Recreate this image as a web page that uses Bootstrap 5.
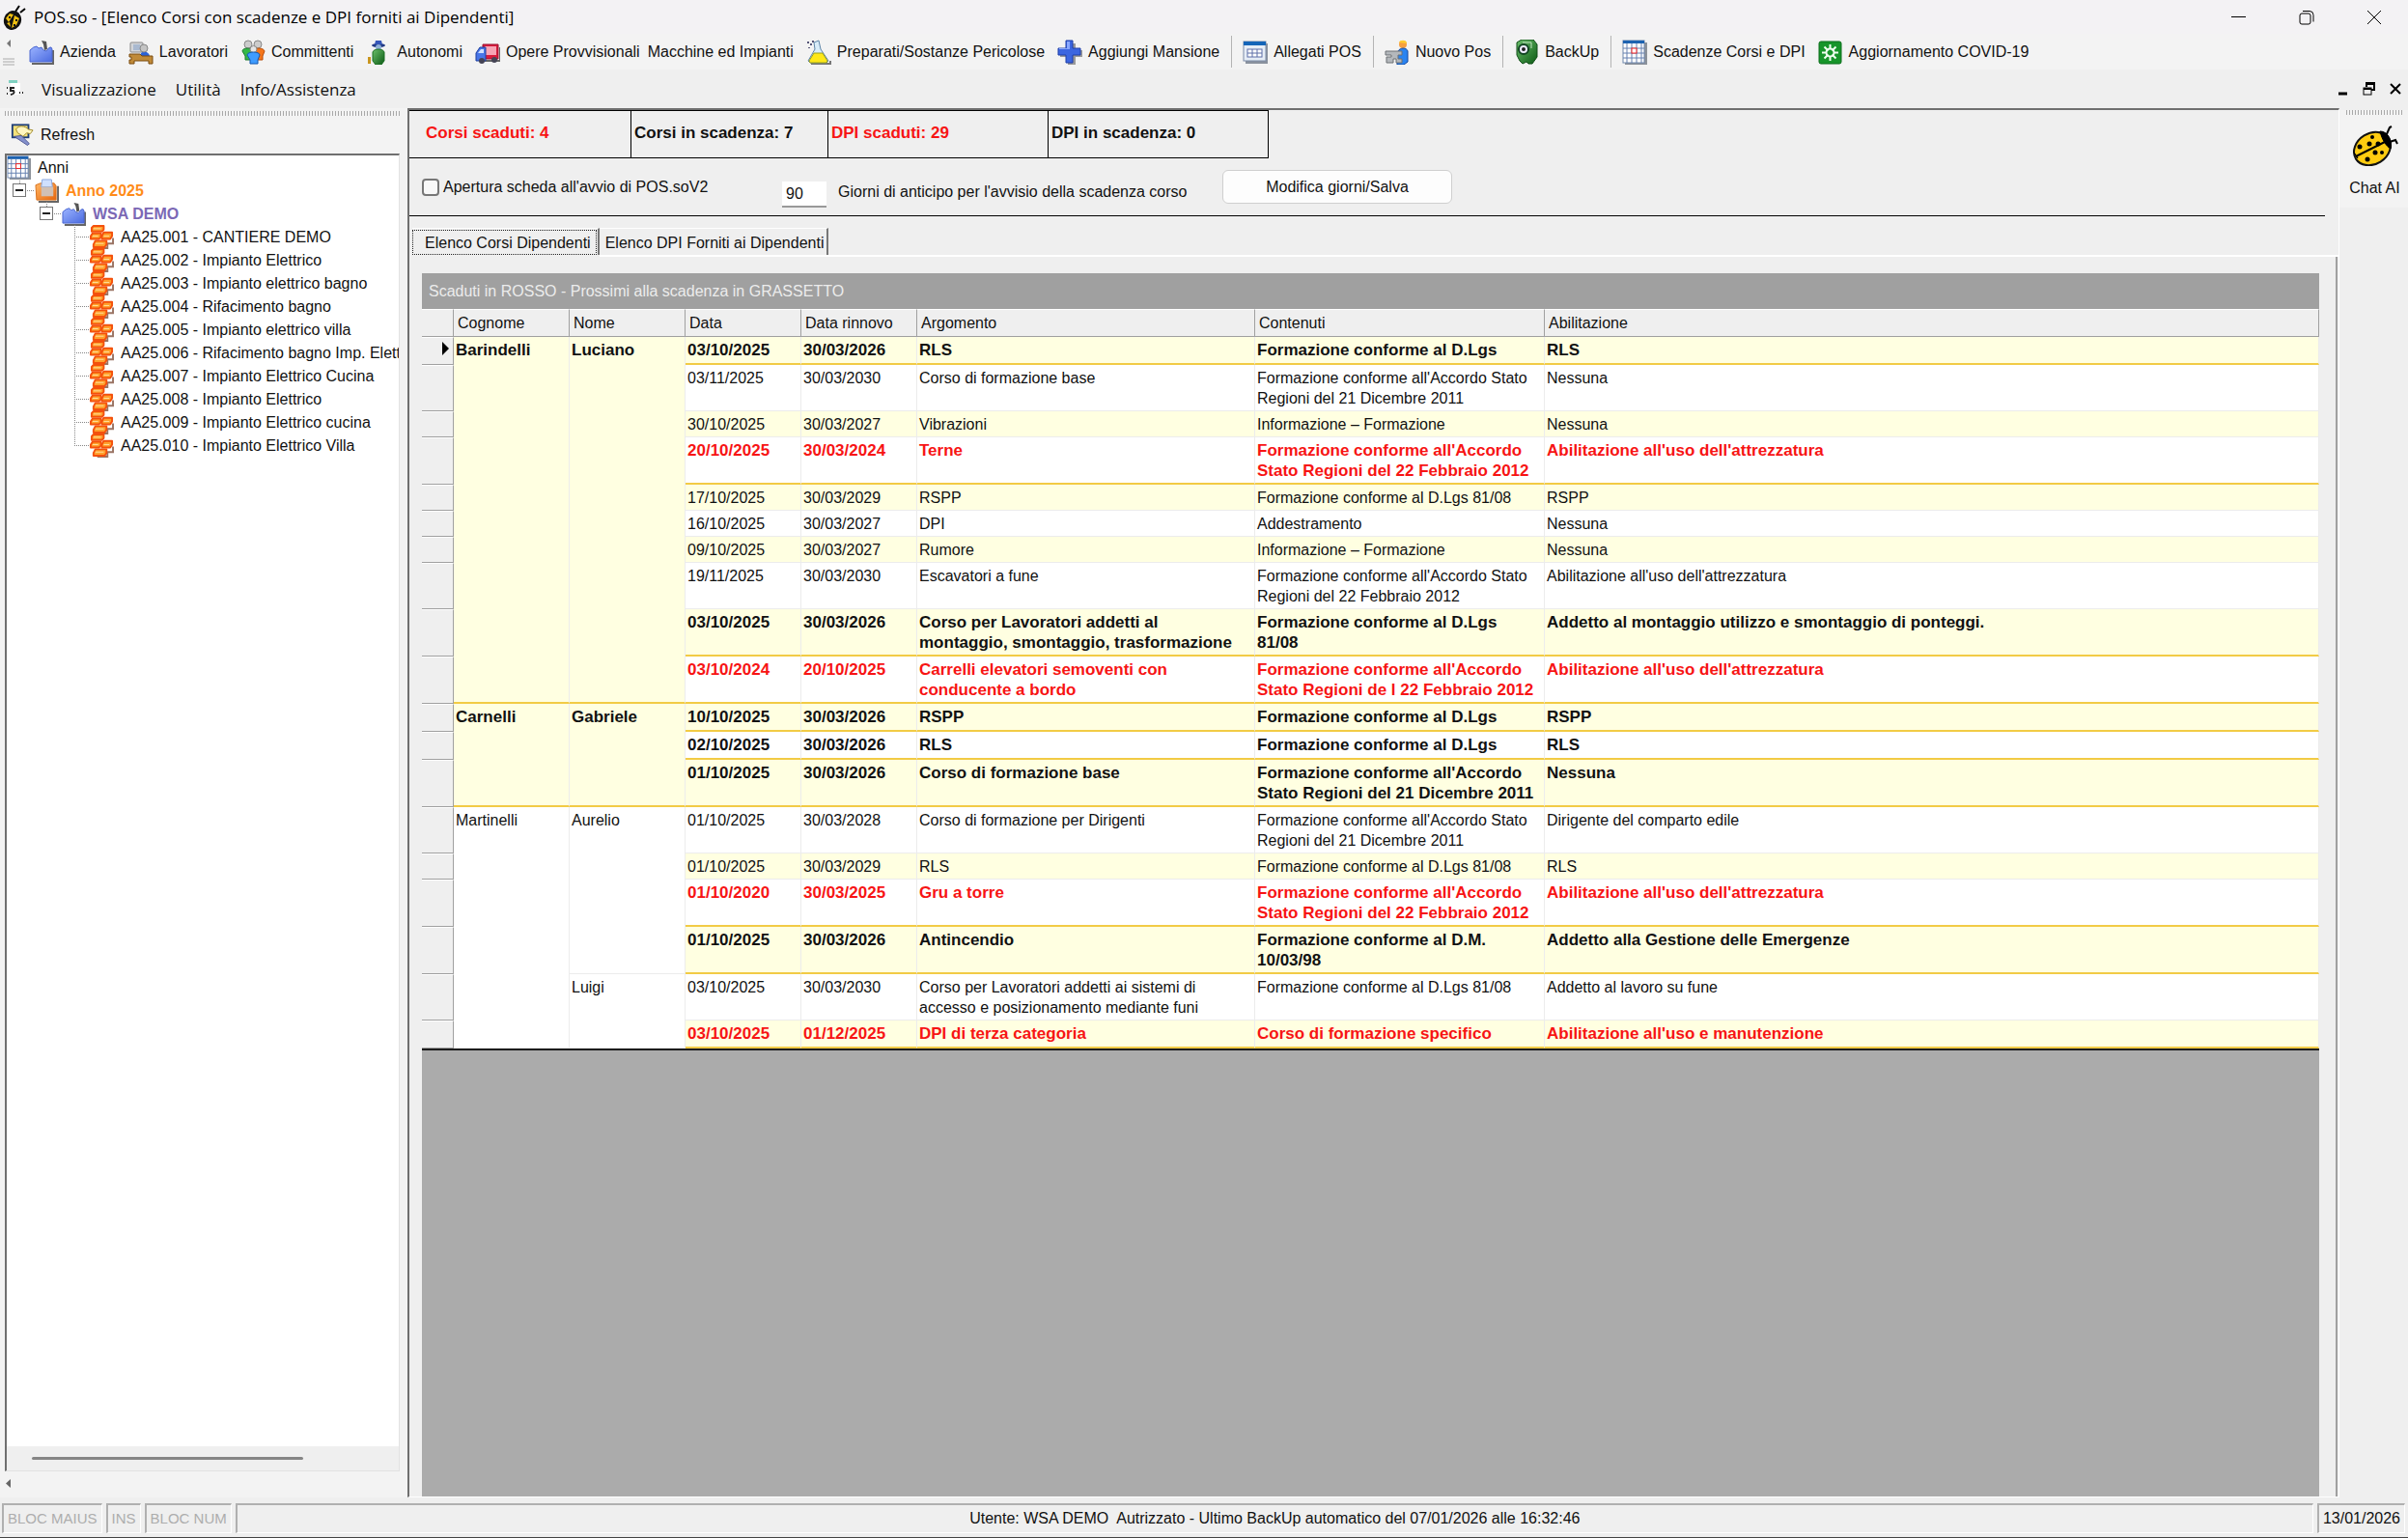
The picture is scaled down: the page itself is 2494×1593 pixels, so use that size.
<!DOCTYPE html>
<html lang="it">
<head>
<meta charset="utf-8">
<meta name="viewport" content="width=device-width, initial-scale=1">
<title>POS.so - [Elenco Corsi con scadenze e DPI forniti ai Dipendenti]</title>
<link rel="stylesheet" href="https://cdn.jsdelivr.net/npm/bootstrap@5.3.0/dist/css/bootstrap.min.css">
<style>
  :root { --face: #efefef; --bar: #f3f3f3; --edge: #a0a0a0; --shade: #6f6f6f; --gold: #f2cb45; --cream: #ffffe1; }
  body { font-family: "Liberation Sans", Arial, sans-serif; font-size: 16px; line-height: 21px; color: #111; background: var(--face); }
  button { font: inherit; color: inherit; background: none; border: 0; padding: 0; }
  svg { display: block; flex: none; }

  .title-bar { height: 35px; background: #f3f2f4; font-family: "Open Sans", "Noto Sans", sans-serif; font-size: 17px; color: #000; padding-left: 3px; }
  .title-bar .win-buttons { gap: 54px; padding-right: 27px; }
  .tool-bar { height: 37px; background: var(--bar); }
  .tool-grip { width: 21px; padding-left: 3px; }
  .tool-btn { display: flex; align-items: center; gap: 6px; padding: 0 4px; white-space: nowrap; }
  .tool-btn svg { margin-left: 5px; }
  .tool-sep { width: 1px; height: 33px; background: #b4b4b4; margin: 0 2px 0 8px; }
  .menu-bar { height: 40px; font-family: "Open Sans", "Noto Sans", sans-serif; font-size: 17px; padding-left: 7px; }
  .menu-bar a { color: #111; text-decoration: none; }
  .menu-bar nav { gap: 20px; margin-left: 18px; }
  .menu-bar .win-buttons { gap: 15px; padding-right: 7px; }

  .grip { height: 5px; background: repeating-linear-gradient(to right, #a8a8a8 0 1px, transparent 1px 3px); }
  .side-panel { width: 422px; background: var(--bar); padding: 3px 7px 0 5px; }
  .refresh { height: 39px; gap: 7px; padding-left: 6px; }
  .tree-box { background: #fff; border: 2px solid var(--shade); border-right: 1px solid #e2e2e2; border-bottom: 1px solid #e2e2e2; overflow: hidden; margin-right: 1px; }
  .tree-box ul { list-style: none; margin: 0; padding: 0; }
  .tree-box ul ul { padding-left: 0; }
  .tree-row { display: flex; align-items: center; height: 24px; white-space: nowrap; }
  .tree-row > svg { margin-right: 7px; }
  .lvl-2 > .tree-row { padding-left: 28px; }
  .lvl-3 > .tree-row { padding-left: 57px; }
  .branch { width: 29px; height: 24px; flex: none; display: flex; align-items: center; padding-left: 6px;
    background: repeating-linear-gradient(to bottom, #888 0 1px, transparent 1px 2px) 13px 0 / 1px 12px no-repeat,
                repeating-linear-gradient(to right, #888 0 1px, transparent 1px 2px) 13px 12px / 16px 1px no-repeat; }
  .lvl-3:not(:last-child) .branch { background-size: 1px 24px, 16px 1px; }
  .expander { width: 14px; height: 14px; border: 1px solid #777; background: #fff; display: flex; align-items: center; justify-content: center; }
  .expander i { width: 8px; height: 2px; background: #222; }
  .year { color: #ff8c1a; font-weight: 700; }
  .firm { color: #7b68b5; font-weight: 700; }
  .side-scroll { height: 25px; background: var(--face); display: flex; align-items: center; padding-left: 26px; }
  .side-scroll span { width: 281px; height: 3px; background: #858585; border-radius: 2px; }
  .side-foot { height: 27px; padding: 8px 0 0 1px; }

  .main-panel { border: 2px solid var(--shade); border-right: 1px solid #fff; border-bottom: 1px solid #fff; min-width: 0; }
  .counters { font-weight: 700; font-size: 17px; }
  .counters > div { width: 228px; height: 50px; border: 1px solid #000; border-left: 0; padding: 12px 0 0 3px; }
  .counters > div:first-child { width: 230px; padding-left: 17px; }
  .counters > div:nth-child(2) { width: 204px; }
  .late { color: #f71414; }
  .options { display: grid; grid-template-columns: 373px 58px 398px 238px; align-items: center; height: 60px; padding-left: 13px; border-bottom: 1px solid #000; margin-right: 14px; }
  .options input[type=checkbox] { appearance: none; width: 18px; height: 18px; border: 2px solid #777; border-radius: 4px; background: #f8f8f8; margin: 0; }
  .days { width: 46px; height: 27px; border: 0; border-bottom: 2px solid #999; background: #fff; padding: 2px 4px 0; color: #111; font-size: 16px; font-weight: 400; border-radius: 0; margin-top: 15px; }
  .days-label { margin-top: 10px; }
  .save { height: 35px; background: #fdfdfd; border: 1px solid #cfcfcf; border-radius: 6px; }

  .tab-strip { padding: 12px 0 0 3px; }
  .tab-strip button { height: 28px; padding: 2px 3px 0 6px; border-right: 2px solid #777; border-top: 1px solid #fff; }
  .tab-strip button[aria-selected=true] { padding: 0; }
  .tab-strip button[aria-selected=true] span { display: block; height: 26px; line-height: 25px; border: 1px dotted #222; padding: 0 5px 0 12px; margin-right: 1px; }
  .tab-strip .rule { border-bottom: 2px solid #fff; }
  .tab-page { border-right: 2px solid var(--edge); padding: 17px 17px 0 13px; margin-right: 1px; }
  .grid-well { background: #ababab; }

  .courses { table-layout: fixed; border-collapse: separate; border-spacing: 0; width: 100%; border-bottom: 2px solid #1c1c1c; background: #fff; }
  .courses caption { caption-side: top; height: 37px; padding: 8px 7px; background: #a0a0a0; color: #ececec; text-align: left; }
  .courses thead th { height: 29px; font-weight: 400; background: var(--face); border-right: 1px solid var(--edge); border-bottom: 1px solid var(--edge); border-top: 1px solid #fff; padding: 2px 4px; }
  .courses tbody th { background: var(--face); border-right: 1px solid var(--edge); border-bottom: 1px solid var(--edge); border-top: 1px solid #fff; padding: 0 4px 0 0; vertical-align: top; }
  .courses td { height: 27px; padding: 3px 8px 2px 2px; vertical-align: top; border-right: 1px solid #ececec; border-bottom: 1px solid #ececec; }
  .courses .alt td { background: var(--cream); }
  .courses .due td, .courses .over td { height: 29px; font-weight: 700; font-size: 17px; border-bottom: 2px solid var(--gold); }
  .courses .over td { color: #f71414; }

  .chat-panel { width: 71px; padding-top: 2px; }
  .chat-panel .chat-in { background: var(--bar); padding: 0 5px 10px 7px; }
  .chat-panel button { margin-top: 11px; width: 100%; white-space: nowrap; }

  .status { height: 42px; padding: 6px 3px 4px 2px; gap: 4px; border-bottom: 1px solid #444; }
  .status > div { border: 1px solid #fff; border-top: 2px solid #b0b0b0; border-left: 2px solid #b0b0b0; height: 31px; padding: 3px 4px 0 4px; white-space: nowrap; }
  .status .off { color: #adadad; font-size: 15px; }
</style>
<script src="https://cdn.jsdelivr.net/npm/bootstrap@5.3.0/dist/js/bootstrap.bundle.min.js"></script>
</head>
<body class="d-flex flex-column min-vh-100">

<svg width="0" height="0" class="position-absolute" aria-hidden="true">
  <defs>
    <linearGradient id="gBlue" x1="0" y1="0" x2="1" y2="1"><stop offset="0" stop-color="#9cb4ff"/><stop offset="1" stop-color="#4a6ae0"/></linearGradient>
    <linearGradient id="gOrange" x1="0" y1="0" x2="1" y2="1"><stop offset="0" stop-color="#ffb765"/><stop offset="1" stop-color="#e8660c"/></linearGradient>
    <linearGradient id="gGreen" x1="0" y1="0" x2="1" y2="1"><stop offset="0" stop-color="#6cc06c"/><stop offset="1" stop-color="#0b5a14"/></linearGradient>
  </defs>
  <symbol id="factory" viewBox="0 0 26 26">
    <path d="M3 25h22V11" fill="none" stroke="#666" stroke-width="2"/>
    <path d="M13 1l5 1 1 8-3 1-1-6z" fill="#555"/>
    <path d="M1 11q4-4 7-4l2 2 3-1 2 3 3 1q3-5 5-4l1 2v13H1z" fill="url(#gBlue)" stroke="#4a66d0"/>
  </symbol>
  <symbol id="worker-desk" viewBox="0 0 26 26">
    <rect x="2" y="3" width="13" height="10" rx="1" fill="#d4d6da" stroke="#888"/><rect x="5" y="5" width="7" height="6" fill="#a9b9d0"/>
    <path d="M12 17c0-6 9-6 10 0v1H12z" fill="#2a62d8"/><circle cx="16" cy="9" r="4" fill="#c4c4c4" stroke="#888"/>
    <path d="M1 15h11l2 2h11v8h-4v-3H6v3H1v-4h2v-3H1z" fill="#c08a38" stroke="#7a4d10"/>
  </symbol>
  <symbol id="people" viewBox="0 0 26 26">
    <circle cx="8" cy="5" r="4" fill="#ccc" stroke="#888"/><circle cx="18" cy="5" r="4" fill="#ccc" stroke="#888"/>
    <path d="M2 12c0-4 10-4 11 0v9H5v-4z" fill="#35b848" stroke="#1e7a30"/><path d="M14 12c0-4 10-4 11 0l-2 5v4h-7z" fill="#f5761a" stroke="#b84c08"/>
    <circle cx="13.500" cy="10" r="3.500" fill="#e4e4e4" stroke="#888"/><path d="M7 16c0-4 13-4 13 0l-2 5v4h-8v-4z" fill="#3f9cff" stroke="#1558b0"/>
  </symbol>
  <symbol id="guard" viewBox="0 0 26 26">
    <ellipse cx="13" cy="6" rx="7" ry="2" fill="#223a86"/><path d="M9 5l1-4h6l1 4z" fill="#3556b8"/><circle cx="13" cy="8" r="3" fill="#8fb0d8"/>
    <path d="M7 13c1-4 11-4 12 0v9l-3 4h-6l-3-4z" fill="url(#gGreen)" stroke="#1b6e22"/><rect x="2" y="18" width="3" height="7" fill="#c9961f"/>
  </symbol>
  <symbol id="truck" viewBox="0 0 26 26">
    <path d="M9 22h17V8" fill="none" stroke="#666" stroke-width="2"/>
    <path d="M8 5h16v15H8z" fill="#d81c3c" stroke="#9a1030"/><path d="M10 7h12v9H10z" fill="#f7a5b5"/>
    <path d="M1 14l4-6h6v14H1z" fill="#4876e8" stroke="#1f3f9c"/><path d="M3 14l3-4h3v4z" fill="#cfe0ff"/>
    <circle cx="7" cy="22" r="3" fill="#445"/><circle cx="20" cy="21" r="3" fill="#445"/>
  </symbol>
  <symbol id="flask" viewBox="0 0 26 26">
    <path d="M5 25h20v-3" fill="none" stroke="#777" stroke-width="2"/>
    <path d="M8 3l5-2 2 9 8 12-2 2H4l-2-2 7-12z" fill="#d8ecf8" stroke="#5f86a8"/><path d="M8 14h9l5 8-1 2H4l-1-2z" fill="#ffe818" stroke="#9aa020"/>
    <path d="M1 2h2v2H1zM4 4h2v2H4zM2 8h2v1H2zM6 1h2v2H6z" fill="#557"/>
  </symbol>
  <symbol id="plus-blue" viewBox="0 0 26 26">
    <path d="M11 4h8v7h7v7h-7v8h-8v-8H3v-7h8z" fill="#999"/><path d="M9 1h7v8h8v7h-8v8H9v-8H1V9h8z" fill="#3c66e0" stroke="#1e3ea8"/><path d="M10 2h3v8H2V9h8z" fill="#8aa8ff"/>
  </symbol>
  <symbol id="form-sheet" viewBox="0 0 26 26">
    <rect x="3" y="4" width="23" height="21" fill="#8a929e"/><rect x="1" y="2" width="23" height="20" fill="#e6edf6" stroke="#7c8ca8"/><path d="M1 2h23v4H1z" fill="#1465b8"/>
    <rect x="5" y="10" width="15" height="8" fill="#fff" stroke="#5c6ea8"/><path d="M5 14h15M10 10v8M15 10v8" stroke="#5c6ea8"/>
  </symbol>
  <symbol id="digger" viewBox="0 0 26 26">
    <circle cx="19" cy="5" r="4" fill="#f6a040"/><path d="M15 3c1-3 8-3 8 1z" fill="#ffcc30"/>
    <path d="M14 12c2-4 9-4 10 0v11l-4 3h-7v-5z" fill="#2a84f0" stroke="#1448a0"/>
    <path d="M1 12h17v4h-4v4h4v4h-6v-4H9v4H2v-6h5v-2H1z" fill="#b4b8bc" stroke="#6c7074"/>
  </symbol>
  <symbol id="safe" viewBox="0 0 26 26">
    <path d="M3 3l5-3h12l4 5v13l-5 7h-4l-2-2-4 2-3-3-3-6z" fill="url(#gGreen)" stroke="#114d18"/>
    <circle cx="10" cy="10" r="5" fill="#eef" stroke="#142" stroke-width="2"/><circle cx="10" cy="10" r="2" fill="#222"/><path d="M9 3h9v6" fill="none" stroke="#bfe0bf"/>
  </symbol>
  <symbol id="calendar" viewBox="0 0 26 26">
    <rect x="3" y="3" width="23" height="23" fill="#8c929a"/><rect x="1" y="1" width="22" height="23" fill="#fff" stroke="#6f87ac"/><path d="M1 1h22v3H1z" fill="#1c62b0"/>
    <path d="M1 9h22M1 14h22M1 19h22M5 4v20M10 4v20M15 4v20M20 4v20" stroke="#6480b0"/><rect x="10" y="9" width="5" height="5" fill="#fff" stroke="#f02020"/>
  </symbol>
  <symbol id="virus" viewBox="0 0 26 26">
    <rect x="1" y="2" width="23" height="23" rx="2" fill="#17952a" stroke="#0d6e1c"/>
    <path d="M12.500 5v5M12.500 17v5M4 13.500h5M16 13.500h5M6.500 7.500l4 4M14.500 15.500l4 4M18.500 7.500l-4 4M10.500 15.500l-4 4" stroke="#f0fff0" stroke-width="2"/><circle cx="12.500" cy="13.500" r="4" fill="none" stroke="#f0fff0" stroke-width="2"/>
  </symbol>
  <symbol id="ladybug" viewBox="0 0 48 42">
    <path d="M35 11l4-9 2-1M39 17l6-2 2 4" fill="none" stroke="#000" stroke-width="2"/>
    <path d="M29 6c7 0 13 10 12 17l-4 1L27 8z" fill="#000"/>
    <ellipse cx="21" cy="24" rx="20" ry="16" transform="rotate(-32 21 24)" fill="#ffcc10" stroke="#111" stroke-width="2"/>
    <path d="M29 6c8 0 13 9 11 18-4-2-9-9-11-18zM2 28l4 6z" fill="#000" stroke="#000"/>
    <path d="M4 32L34 17" stroke="#000" stroke-width="2"/>
    <g fill="#000"><circle cx="21" cy="12" r="2"/><circle cx="8" cy="22" r="2.500"/><circle cx="18" cy="19" r="2.500"/><circle cx="27" cy="19" r="2.500"/><circle cx="24" cy="28" r="2.500"/><circle cx="31" cy="28" r="2"/><circle cx="16" cy="35" r="2.500"/></g>
  </symbol>
  <symbol id="box-orange" viewBox="0 0 26 26">
    <path d="M4 25h21V8" fill="none" stroke="#666" stroke-width="2"/><path d="M1 7l5-2h15l2 3v15H2z" fill="url(#gOrange)" stroke="#d8701c"/>
    <path d="M8 1h10l1 8H7z" fill="#cfe0ff" stroke="#89a8e0"/><rect x="7" y="9" width="13" height="10" fill="#d0c0b4"/>
  </symbol>
  <symbol id="bricks" viewBox="0 0 26 26">
    <path d="M8 25h11v-5h6v-6" fill="none" stroke="#9a7464" stroke-width="2"/>
    <g fill="#ffa02c" stroke="#f4500c" stroke-width="2" stroke-linejoin="round">
      <path d="M2 3l2-2h11v4l-2 2H2z"/><path d="M1 12l2-3h9v4l-2 2H1z"/><path d="M13 12l2-4h9v4l-2 3h-9z"/><path d="M4 21l2-4h12v4l-2 3H4z"/></g>
    <path d="M4 4h8M3 12h6M15 12h6M6 20h9" stroke="#ffe0a0"/>
  </symbol>
  <symbol id="refresh-tool" viewBox="0 0 26 26">
    <rect x="1" y="1" width="20" height="16" fill="#1f3f78"/><rect x="3" y="3" width="16" height="12" fill="#f4e27a"/>
    <path d="M6 7c3-5 10-4 14 0l5 1-3 4-4-1-4 4-6-4z" fill="#fff6c0" stroke="#9c8420"/><path d="M4 15l15 10 2-2-9-9z" fill="#8490cc" stroke="#4a5490"/>
  </symbol>
</svg>

<header>
  <div class="title-bar d-flex align-items-center">
    <svg width="24" height="26" viewBox="0 0 24 26"><path d="M13 7l4-6M18 8l5-4" stroke="#000" stroke-width="2"/><ellipse cx="10" cy="16" rx="9" ry="10" fill="#111" transform="rotate(20 10 16)"/><path d="M3 14l4-5 4 1-5 8zM12 11l5 3-3 7-5 3zM4 19l3-1 1 5z" fill="#f0c010"/><path d="M6 12h2v2H6zM13 15h2v2h-2zM11 20h2v2h-2z" fill="#111"/></svg>
    <span class="ms-2">POS.so - [Elenco Corsi con scadenze e DPI forniti ai Dipendenti]</span>
    <div class="win-buttons d-flex ms-auto">
      <button type="button" aria-label="Riduci a icona"><svg width="16" height="16" viewBox="0 0 16 16"><path d="M0 7.500h15" stroke="#000"/></svg></button>
      <button type="button" aria-label="Ripristina"><svg width="16" height="16" viewBox="0 0 16 16" fill="none" stroke="#000"><rect x="1" y="4" width="11" height="11" rx="2"/><path d="M4 1.500h7q4 0 4 4v7"/></svg></button>
      <button type="button" aria-label="Chiudi"><svg width="16" height="16" viewBox="0 0 16 16"><path d="M1 1l14 14M15 1L1 15" stroke="#000"/></svg></button>
    </div>
  </div>

  <div class="tool-bar d-flex align-items-center">
    <div class="tool-grip"><svg width="14" height="30" viewBox="0 0 14 30"><path d="M8 2v8L4 6z" fill="#777"/><path d="M0 22h12M0 25h12M0 28h12" stroke="#aaa"/></svg></div>
    <button type="button" class="tool-btn"><svg width="26" height="26"><use href="#factory"/></svg>Azienda</button>
    <button type="button" class="tool-btn"><svg width="26" height="26"><use href="#worker-desk"/></svg>Lavoratori</button>
    <button type="button" class="tool-btn"><svg width="26" height="26"><use href="#people"/></svg>Committenti</button>
    <button type="button" class="tool-btn"><svg width="26" height="26"><use href="#guard"/></svg>Autonomi</button>
    <button type="button" class="tool-btn"><svg width="26" height="26"><use href="#truck"/></svg>Opere Provvisionali</button>
    <button type="button" class="tool-btn">Macchine ed Impianti</button>
    <button type="button" class="tool-btn"><svg width="26" height="26"><use href="#flask"/></svg>Preparati/Sostanze Pericolose</button>
    <button type="button" class="tool-btn"><svg width="26" height="26"><use href="#plus-blue"/></svg>Aggiungi Mansione</button>
    <span class="tool-sep"></span>
    <button type="button" class="tool-btn"><svg width="26" height="26"><use href="#form-sheet"/></svg>Allegati POS</button>
    <span class="tool-sep"></span>
    <button type="button" class="tool-btn"><svg width="26" height="26"><use href="#digger"/></svg>Nuovo Pos</button>
    <span class="tool-sep"></span>
    <button type="button" class="tool-btn"><svg width="26" height="26"><use href="#safe"/></svg>BackUp</button>
    <span class="tool-sep"></span>
    <button type="button" class="tool-btn"><svg width="26" height="26"><use href="#calendar"/></svg>Scadenze Corsi e DPI</button>
    <button type="button" class="tool-btn"><svg width="26" height="26"><use href="#virus"/></svg>Aggiornamento COVID-19</button>
  </div>

  <div class="menu-bar d-flex align-items-center">
    <svg width="18" height="20" viewBox="0 0 18 20"><path d="M2 1h9v3H2z" fill="#7fd0c0"/><path d="M4 4h10v12H4z" fill="#fff"/><path d="M0 9h1M0 15h1M8 9H4v3h3q2 3-3 4M13 14h1M16 14h1" stroke="#222" stroke-width="2" fill="none"/></svg>
    <nav class="d-flex"><a href="#">Visualizzazione</a><a href="#">Utilità</a><a href="#">Info/Assistenza</a></nav>
    <div class="win-buttons d-flex ms-auto">
      <button type="button" aria-label="Riduci finestra"><svg width="10" height="14" viewBox="0 0 10 14"><path d="M0 12h9" stroke="#000" stroke-width="3"/></svg></button>
      <button type="button" aria-label="Ripristina finestra"><svg width="13" height="14" viewBox="0 0 13 14" fill="none" stroke="#000"><path d="M4 5V1h8v7H9M4 2h8" stroke-width="2"/><rect x="1" y="6" width="8" height="7"/><path d="M1 7h8" stroke-width="2"/></svg></button>
      <button type="button" aria-label="Chiudi finestra"><svg width="12" height="14" viewBox="0 0 12 14"><path d="M1 2l10 10M11 2L1 12" stroke="#000" stroke-width="2"/></svg></button>
    </div>
  </div>
</header>

<main class="d-flex flex-grow-1">
  <aside class="side-panel d-flex flex-column flex-shrink-0">
    <div class="grip"></div>
    <button type="button" class="refresh d-flex align-items-center"><svg width="24" height="25"><use href="#refresh-tool"/></svg>Refresh</button>
    <div class="tree-box d-flex flex-column flex-grow-1">
      <ul class="flex-grow-1">
        <li><div class="tree-row"><svg width="25" height="25"><use href="#calendar"/></svg>Anni</div>
          <ul><li><div class="tree-row year"><span class="branch"><button type="button" class="expander" aria-label="Comprimi Anno 2025"><i></i></button></span><svg width="25" height="25"><use href="#box-orange"/></svg>Anno 2025</div>
            <ul><li class="lvl-2"><div class="tree-row firm"><span class="branch"><button type="button" class="expander" aria-label="Comprimi WSA DEMO"><i></i></button></span><svg width="25" height="25"><use href="#factory"/></svg>WSA DEMO</div>
              <ul>
                <li class="lvl-3"><div class="tree-row"><span class="branch"></span><svg width="25" height="25"><use href="#bricks"/></svg>AA25.001 - CANTIERE DEMO</div></li>
                <li class="lvl-3"><div class="tree-row"><span class="branch"></span><svg width="25" height="25"><use href="#bricks"/></svg>AA25.002 - Impianto Elettrico</div></li>
                <li class="lvl-3"><div class="tree-row"><span class="branch"></span><svg width="25" height="25"><use href="#bricks"/></svg>AA25.003 - Impianto elettrico bagno</div></li>
                <li class="lvl-3"><div class="tree-row"><span class="branch"></span><svg width="25" height="25"><use href="#bricks"/></svg>AA25.004 - Rifacimento bagno</div></li>
                <li class="lvl-3"><div class="tree-row"><span class="branch"></span><svg width="25" height="25"><use href="#bricks"/></svg>AA25.005 - Impianto elettrico villa</div></li>
                <li class="lvl-3"><div class="tree-row"><span class="branch"></span><svg width="25" height="25"><use href="#bricks"/></svg>AA25.006 - Rifacimento bagno Imp. Elett</div></li>
                <li class="lvl-3"><div class="tree-row"><span class="branch"></span><svg width="25" height="25"><use href="#bricks"/></svg>AA25.007 - Impianto Elettrico Cucina</div></li>
                <li class="lvl-3"><div class="tree-row"><span class="branch"></span><svg width="25" height="25"><use href="#bricks"/></svg>AA25.008 - Impianto Elettrico</div></li>
                <li class="lvl-3"><div class="tree-row"><span class="branch"></span><svg width="25" height="25"><use href="#bricks"/></svg>AA25.009 - Impianto Elettrico cucina</div></li>
                <li class="lvl-3"><div class="tree-row"><span class="branch"></span><svg width="25" height="25"><use href="#bricks"/></svg>AA25.010 - Impianto Elettrico Villa</div></li>
              </ul></li></ul></li></ul></li>
      </ul>
      <div class="side-scroll"><span></span></div>
    </div>
    <div class="side-foot"><svg width="6" height="10" viewBox="0 0 6 10"><path d="M5 0v9L0 4.500z" fill="#666"/></svg></div>
  </aside>

  <section class="main-panel d-flex flex-column flex-grow-1">
    <div class="counters d-flex">
      <div class="late">Corsi scaduti: 4</div>
      <div>Corsi in scadenza: 7</div>
      <div class="late">DPI scaduti: 29</div>
      <div>DPI in scadenza: 0</div>
    </div>
    <form class="options">
      <div class="d-flex align-items-center gap-1"><input type="checkbox" id="openStart"><label for="openStart">Apertura scheda all'avvio di POS.soV2</label></div>
      <input type="text" class="days" id="days" value="90">
      <label for="days" class="days-label">Giorni di anticipo per l'avvisio della scadenza corso</label>
      <button type="button" class="save">Modifica giorni/Salva</button>
    </form>
    <div class="tab-strip d-flex" role="tablist">
      <button type="button" role="tab" aria-selected="true"><span>Elenco Corsi Dipendenti</span></button>
      <div class="rule d-flex flex-grow-1"><button type="button" role="tab" aria-selected="false">Elenco DPI Forniti ai Dipendenti</button></div>
    </div>
    <div class="tab-page d-flex flex-column flex-grow-1">
      <div class="grid-well flex-grow-1">
        <table class="courses">
          <caption>Scaduti in ROSSO - Prossimi alla scadenza in GRASSETTO</caption>
          <colgroup><col style="width:33px"><col style="width:120px"><col style="width:120px"><col style="width:120px"><col style="width:120px"><col style="width:350px"><col style="width:300px"><col></colgroup>
          <thead><tr><th></th><th>Cognome</th><th>Nome</th><th>Data</th><th>Data rinnovo</th><th>Argomento</th><th>Contenuti</th><th>Abilitazione</th></tr></thead>
          <tbody>
            <tr class="alt due"><th><svg width="7" height="14" viewBox="0 0 7 14" class="ms-auto mt-1"><path d="M0 0l7 7-7 7z" fill="#000"/></svg></th><td rowspan="10">Barindelli</td><td rowspan="10">Luciano</td><td>03/10/2025</td><td>30/03/2026</td><td>RLS</td><td>Formazione conforme al D.Lgs</td><td>RLS</td></tr>
            <tr><th></th><td>03/11/2025</td><td>30/03/2030</td><td>Corso di formazione base</td><td>Formazione conforme all'Accordo Stato Regioni del 21 Dicembre 2011</td><td>Nessuna</td></tr>
            <tr class="alt"><th></th><td>30/10/2025</td><td>30/03/2027</td><td>Vibrazioni</td><td>Informazione – Formazione</td><td>Nessuna</td></tr>
            <tr class="over"><th></th><td>20/10/2025</td><td>30/03/2024</td><td>Terne</td><td>Formazione conforme all'Accordo Stato Regioni del 22 Febbraio 2012</td><td>Abilitazione all'uso dell'attrezzatura</td></tr>
            <tr class="alt"><th></th><td>17/10/2025</td><td>30/03/2029</td><td>RSPP</td><td>Formazione conforme al D.Lgs 81/08</td><td>RSPP</td></tr>
            <tr><th></th><td>16/10/2025</td><td>30/03/2027</td><td>DPI</td><td>Addestramento</td><td>Nessuna</td></tr>
            <tr class="alt"><th></th><td>09/10/2025</td><td>30/03/2027</td><td>Rumore</td><td>Informazione – Formazione</td><td>Nessuna</td></tr>
            <tr><th></th><td>19/11/2025</td><td>30/03/2030</td><td>Escavatori a fune</td><td>Formazione conforme all'Accordo Stato Regioni del 22 Febbraio 2012</td><td>Abilitazione all'uso dell'attrezzatura</td></tr>
            <tr class="alt due"><th></th><td>03/10/2025</td><td>30/03/2026</td><td>Corso per Lavoratori addetti al montaggio, smontaggio, trasformazione</td><td>Formazione conforme al D.Lgs 81/08</td><td>Addetto al montaggio utilizzo e smontaggio di ponteggi.</td></tr>
            <tr class="over"><th></th><td>03/10/2024</td><td>20/10/2025</td><td>Carrelli elevatori semoventi con conducente a bordo</td><td>Formazione conforme all'Accordo Stato Regioni de l 22 Febbraio 2012</td><td>Abilitazione all'uso dell'attrezzatura</td></tr>
            <tr class="alt due"><th></th><td rowspan="3">Carnelli</td><td rowspan="3">Gabriele</td><td>10/10/2025</td><td>30/03/2026</td><td>RSPP</td><td>Formazione conforme al D.Lgs</td><td>RSPP</td></tr>
            <tr class="due"><th></th><td>02/10/2025</td><td>30/03/2026</td><td>RLS</td><td>Formazione conforme al D.Lgs</td><td>RLS</td></tr>
            <tr class="alt due"><th></th><td>01/10/2025</td><td>30/03/2026</td><td>Corso di formazione base</td><td>Formazione conforme all'Accordo Stato Regioni del 21 Dicembre 2011</td><td>Nessuna</td></tr>
            <tr><th></th><td rowspan="6">Martinelli</td><td rowspan="4">Aurelio</td><td>01/10/2025</td><td>30/03/2028</td><td>Corso di formazione per Dirigenti</td><td>Formazione conforme all'Accordo Stato Regioni del 21 Dicembre 2011</td><td>Dirigente del comparto edile</td></tr>
            <tr class="alt"><th></th><td>01/10/2025</td><td>30/03/2029</td><td>RLS</td><td>Formazione conforme al D.Lgs 81/08</td><td>RLS</td></tr>
            <tr class="over"><th></th><td>01/10/2020</td><td>30/03/2025</td><td>Gru a torre</td><td>Formazione conforme all'Accordo Stato Regioni del 22 Febbraio 2012</td><td>Abilitazione all'uso dell'attrezzatura</td></tr>
            <tr class="alt due"><th></th><td>01/10/2025</td><td>30/03/2026</td><td>Antincendio</td><td>Formazione conforme al D.M. 10/03/98</td><td>Addetto alla Gestione delle Emergenze</td></tr>
            <tr><th></th><td rowspan="2">Luigi</td><td>03/10/2025</td><td>30/03/2030</td><td>Corso per Lavoratori addetti ai sistemi di accesso e posizionamento mediante funi</td><td>Formazione conforme al D.Lgs 81/08</td><td>Addetto al lavoro su fune</td></tr>
            <tr class="alt over"><th></th><td>03/10/2025</td><td>01/12/2025</td><td>DPI di terza categoria</td><td>Corso di formazione specifico</td><td>Abilitazione all'uso e manutenzione</td></tr>
          </tbody>
        </table>
      </div>
    </div>
  </section>

  <aside class="chat-panel flex-shrink-0">
    <div class="chat-in">
      <div class="grip"></div>
      <button type="button"><svg width="48" height="42" class="mx-auto"><use href="#ladybug"/></svg><span class="d-block mt-2 pt-1">Chat AI</span></button>
    </div>
  </aside>
</main>

<footer class="status d-flex">
  <div class="off">BLOC MAIUS</div>
  <div class="off">INS</div>
  <div class="off">BLOC NUM</div>
  <div class="flex-grow-1 text-center">Utente: WSA DEMO&nbsp; Autrizzato - Ultimo BackUp automatico del 07/01/2026 alle 16:32:46</div>
  <div>13/01/2026</div>
</footer>
</body>
</html>
